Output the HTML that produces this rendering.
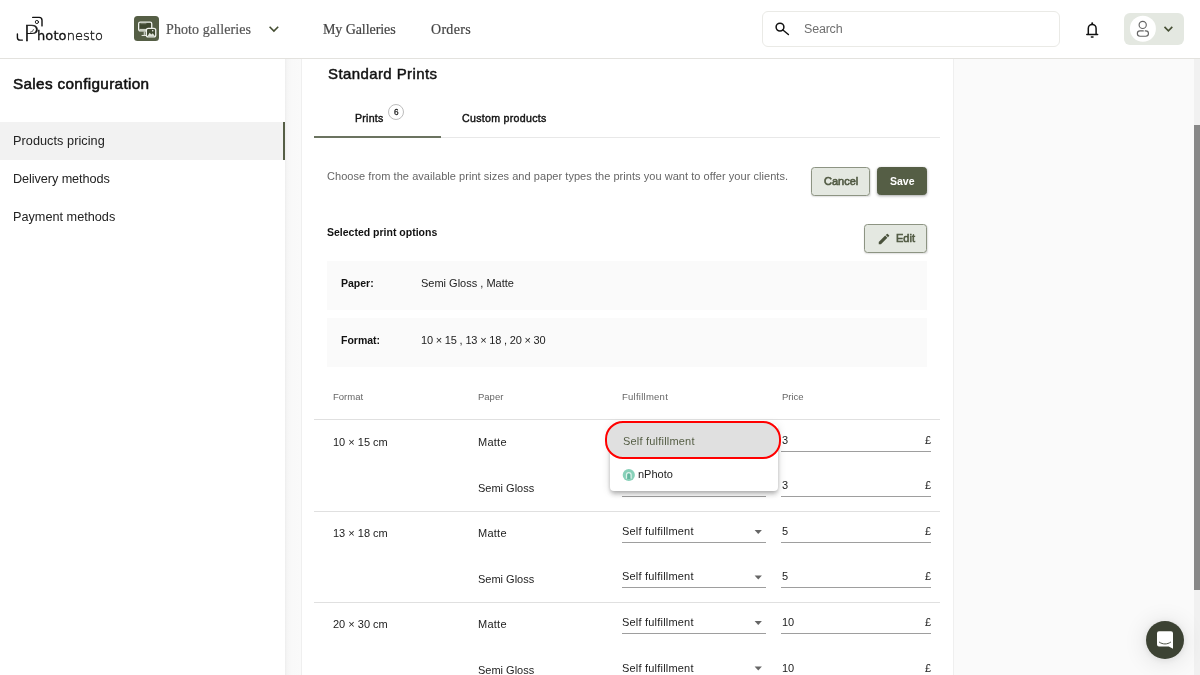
<!DOCTYPE html>
<html lang="en">
<head>
<meta charset="utf-8">
<title>Sales configuration</title>
<style>
*{box-sizing:border-box;margin:0;padding:0}
html,body{width:1200px;height:675px;overflow:hidden;background:#fafafa}
body{position:relative;font-family:"Liberation Sans",Arial,sans-serif;color:#212121;font-size:11px}
.a{position:absolute}
.t{will-change:transform;position:absolute;white-space:nowrap;line-height:1}
.serif{font-family:"Liberation Serif","DejaVu Serif",serif}
.b{font-weight:bold}
.dj{font-family:"DejaVu Sans","Liberation Sans",sans-serif}
#header{left:0;top:0;width:1200px;height:59px;background:#fff;border-bottom:1px solid #e3e2de}
#sidebar{left:0;top:59px;width:285px;height:617px;background:#fff}
#sideshadow{left:285px;top:59px;width:16px;height:617px;background:linear-gradient(90deg,#ededed,#f5f5f5 12%,#f9f9f9 40%,#fafafa)}
#card{left:301px;top:50px;width:653px;height:640px;background:#fff;border:1px solid #efefef}
.hl{position:absolute;height:1px;background:#e0e0e0}
.ul{position:absolute;height:1px;background:#9e9e9e}
.box{position:absolute;left:327px;width:600px;background:#fafafa}
.btn{position:absolute;border-radius:3.500px;border:1px solid #8d9483;background:#e4e8e1;box-shadow:0.500px 1px 1.500px rgba(0,0,0,.12)}
.r{font-size:11px;color:#222}
.arr{position:absolute;width:0;height:0;border-left:3.550px solid transparent;border-right:3.550px solid transparent;border-top:3.900px solid #606060}
.muted{color:#666}
.olive{color:#555e45}
</style>
</head>
<body>
<!-- page background pieces -->
<div class="a" id="sidebar"></div>
<div class="a" id="sideshadow"></div>
<div class="a" id="card"></div>

<!-- header -->
<div class="a" id="header"></div>
<svg class="a" id="logo" style="left:14px;top:12px" width="96" height="34" viewBox="14 12 96 34" fill="none" stroke="#111" stroke-width="1.4" stroke-linecap="round">
  <path d="M17.400 34v3.400a2.700 2.700 0 0 0 2.700 2.700h2.300"/>
  <path d="M30.400 32.300a3.300 3.300 0 0 0 3.100-2.700" stroke-width="0.700"/>
  <path d="M32.700 17.400h6.500a2.800 2.800 0 0 1 2.800 2.800v5.700"/>
  <circle cx="36.900" cy="22" r="1.600" stroke-width="0.900"/>
</svg>
<div class="t dj" id="logoP" style="left:23.300px;top:22.600px;font-size:22px;font-weight:200;color:#111;-webkit-text-stroke:0.400px #111;transform:scaleX(1.22);transform-origin:0 0">P</div>
<div class="t dj" id="logo1" style="left:37.300px;top:29.300px;font-size:13px;color:#111;letter-spacing:0.100px"><span style="-webkit-text-stroke:0.300px #111">hoto</span><span style="font-weight:200;-webkit-text-stroke:0.400px #222;color:#222;letter-spacing:0.050px">nesto</span></div>

<div class="a" id="galicon" style="left:134.300px;top:16.300px;width:25.200px;height:25.200px;border-radius:3.500px;background:#555e45"></div>
<svg class="a" style="left:134.300px;top:16.300px" width="25.200" height="25.200" viewBox="0 0 25.200 25.200" fill="none" stroke="#f1f3ee" stroke-width="1.300">
  <rect x="4.650" y="6.150" width="13.100" height="8.800" rx="1.600" fill="#3e472f"/>
  <rect x="5.300" y="12.900" width="7" height="1.700" fill="#c9cec1" stroke="none"/>
  <path d="M6.400 7.700h6" stroke="#aab09f" stroke-width="0.600"/>
  <path d="M10.300 15.400v3.600" stroke-width="1.100" stroke="#d5d9cf"/>
  <path d="M7.600 19.500h4.600" stroke-width="1" stroke="#e3e6de"/>
  <rect x="12.350" y="12.350" width="9.400" height="8.600" rx="1.900" fill="#414a32"/>
  <path d="M13.400 20.200l2.300-3.500 1.600 1.900 1.500-1.300 2.200 2.900z" fill="#dfe3d9" stroke="none"/>
  <circle cx="18.700" cy="14.700" r="0.800" fill="#f1f3ee" stroke="none"/>
</svg>
<div class="t serif" id="pg" style="left:166px;top:22.600px;font-size:14px;color:#555;letter-spacing:0.1px;-webkit-text-stroke:0.2px #555">Photo galleries</div>
<svg class="a" style="left:267px;top:24px" width="14" height="10" viewBox="0 0 14 10" fill="none" stroke="#454e33" stroke-width="1.6"><path d="M2.6 2.7L6.9 7l4.3-4.3"/></svg>
<div class="t serif" id="mg" style="left:323px;top:22.600px;font-size:14px;color:#444;letter-spacing:-0.08px;-webkit-text-stroke:0.2px #444">My Galleries</div>
<div class="t serif" id="ord" style="left:430.5px;top:22.600px;font-size:14px;color:#444;letter-spacing:0.3px;-webkit-text-stroke:0.2px #444">Orders</div>

<div class="a" id="search" style="left:762px;top:11px;width:298px;height:36px;border:1px solid #eaeae6;border-radius:6px;background:#fff"></div>
<svg class="a" style="left:770px;top:17px" width="24" height="24" viewBox="770 17 24 24" fill="none" stroke="#111" stroke-width="1.5"><circle cx="780" cy="27.100" r="3.900"/><path d="M782.900 30l5.500 4.500" stroke-linecap="round"/></svg>
<div class="t" id="searcht" style="left:803.700px;top:23.300px;font-size:12.500px;letter-spacing:-0.200px;color:#707070">Search</div>

<svg class="a" id="bell" style="left:1082px;top:19px" width="20" height="20" viewBox="0 0 20 20" fill="none" stroke="#111" stroke-width="1.5"><path d="M6.300 15.200V9.400a3.900 3.900 0 0 1 7.800 0v5.800"/><path d="M4.800 15.400h10.800" stroke-linecap="round"/><circle cx="10.200" cy="4.300" r="1" fill="#111" stroke="none"/><path d="M9.400 18.100h1.600" stroke-linecap="round"/></svg>

<div class="a" id="avatar" style="left:1124px;top:13px;width:60px;height:32px;border-radius:6px;background:#e4e8e1"></div>
<svg class="a" style="left:1124px;top:13px" width="60" height="32" viewBox="1124 13 60 32" fill="none">
  <circle cx="1142.900" cy="28.800" r="13" fill="#fff"/>
  <circle cx="1142.700" cy="24.900" r="3.600" stroke="#666" stroke-width="1.150"/>
  <path d="M1143.300 30.900h-3.300a2.650 2.650 0 0 0 0 5.300h5.800a2.650 2.650 0 0 0 0-5.300h-0.600" stroke="#666" stroke-width="1.150" stroke-linecap="round"/>
  <path d="M1164.500 26.900l3.900 4 3.900-4" stroke="#454e33" stroke-width="1.600"/>
</svg>

<!-- sidebar -->
<div class="t" id="sc" style="left:13px;top:76.400px;font-size:15.300px;letter-spacing:0.330px;color:#111;-webkit-text-stroke:0.550px #111">Sales configuration</div>
<div class="a" style="left:0;top:122px;width:285px;height:38px;background:#f2f2f2"></div>
<div class="a" style="left:283px;top:122px;width:2px;height:38px;background:#555e45"></div>
<div class="t" id="s1" style="left:13px;top:134.9px;font-size:12.7px;color:#222;letter-spacing:0.05px">Products pricing</div>
<div class="t" id="s2" style="left:13px;top:172.9px;font-size:12.7px;color:#222;letter-spacing:-0.08px">Delivery methods</div>
<div class="t" id="s3" style="left:13px;top:211px;font-size:12.7px;color:#222">Payment methods</div>

<!-- main card -->
<div class="t" id="sp" style="left:328px;top:66px;font-size:15px;color:#111;-webkit-text-stroke:0.45px #111;letter-spacing:0.4px">Standard Prints</div>
<div class="t" id="tab1" style="left:355.300px;top:113.300px;font-size:10.600px;color:#111;-webkit-text-stroke:0.400px #111;letter-spacing:0.250px">Prints</div>
<div class="a" id="badge" style="left:387.6px;top:104px;width:16px;height:16px;border-radius:50%;border:1px solid #bdbdbd;background:#fff"></div>
<div class="t" id="badget" style="left:393.500px;top:108.700px;font-size:8.200px;color:#222;-webkit-text-stroke:0.300px #222">6</div>
<div class="t" id="tab2" style="left:462px;top:113.300px;font-size:10.600px;color:#111;-webkit-text-stroke:0.400px #111;letter-spacing:0.300px">Custom products</div>
<div class="hl" style="left:314px;top:137.400px;width:626px;background:#e8e8e8"></div>
<div class="a" style="left:314px;top:136px;width:127px;height:2px;background:#6b7360"></div>

<div class="t muted" id="choose" style="left:327px;top:171.2px;font-size:11px;letter-spacing:0.047px">Choose from the available print sizes and paper types the prints you want to offer your clients.</div>
<div class="btn" id="cancel" style="left:810.600px;top:167px;width:59.400px;height:29px"></div>
<div class="t olive" id="cancelt" style="left:823.500px;top:176px;font-size:11px;-webkit-text-stroke:0.6px #4f5841">Cancel</div>
<div class="btn" id="save" style="left:877px;top:167px;width:50px;height:28px;background:#555e45;border-color:#555e45;box-shadow:0 1px 3px rgba(0,0,0,.35)"></div>
<div class="t b" id="savet" style="left:890px;top:176.2px;font-size:10.5px;color:#fff">Save</div>

<div class="t b" id="spo" style="left:327px;top:226.9px;font-size:10.5px;color:#111">Selected print options</div>
<div class="btn" id="edit" style="left:864px;top:224px;width:63px;height:29px"></div>
<svg class="a" style="left:877px;top:232px" width="14" height="14" viewBox="0 0 24 24" fill="#4a523c"><path d="M3 17.250V21h3.750L17.810 9.940l-3.750-3.750L3 17.250zM20.710 7.040a1 1 0 0 0 0-1.410l-2.340-2.340a1 1 0 0 0-1.410 0l-1.830 1.830 3.750 3.750 1.830-1.830z"/></svg>
<div class="t olive" id="editt" style="left:895.500px;top:233px;font-size:11px;-webkit-text-stroke:0.6px #4f5841">Edit</div>

<div class="box" style="top:261px;height:49px"></div>
<div class="box" style="top:318px;height:49px"></div>
<div class="t b" id="paperl" style="left:341px;top:277.6px;font-size:10.5px;color:#111">Paper:</div>
<div class="t" id="paperv" style="left:420.500px;top:278px;font-size:11px;color:#222">Semi Gloss , Matte</div>
<div class="t b" id="formatl" style="left:341px;top:335.1px;font-size:10.5px;color:#111">Format:</div>
<div class="t" id="formatv" style="left:420.500px;top:334.7px;font-size:11px;color:#222;letter-spacing:-0.18px">10 × 15 , 13 × 18 , 20 × 30</div>

<!-- table -->
<div class="t muted" id="h1" style="left:333.400px;top:391.600px;font-size:9.500px">Format</div>
<div class="t muted" id="h2" style="left:478px;top:391.600px;font-size:9.500px">Paper</div>
<div class="t muted" id="h3" style="left:622px;top:391.600px;font-size:9.500px;letter-spacing:0.25px">Fulfillment</div>
<div class="t muted" id="h4" style="left:781.500px;top:391.600px;font-size:9.500px">Price</div>
<div class="hl" style="left:314px;top:419.200px;width:626px"></div>
<div class="hl" style="left:314px;top:510.700px;width:626px"></div>
<div class="hl" style="left:314px;top:601.600px;width:626px"></div>
<div id="rows">
<div class="t r" id="f1" style="left:333.4px;top:437px">10 × 15 cm</div>
<div class="t r" id="p1" style="left:478px;top:437px;letter-spacing:0.25px">Matte</div>
<div class="t r" id="pr1" style="left:781.6px;top:435px">3</div>
<div class="t r" id="gbp1" style="left:924.8px;top:435px">£</div>
<div class="ul" style="left:781px;top:450.7px;width:150px"></div>
<div class="t r" id="p2" style="left:478px;top:483px">Semi Gloss</div>
<div class="ul" style="left:622px;top:496.3px;width:143.500px"></div>
<div class="t r" id="pr2" style="left:781.6px;top:480px">3</div>
<div class="t r" id="gbp2" style="left:924.8px;top:480px">£</div>
<div class="ul" style="left:781px;top:496.3px;width:150px"></div>
<div class="t r" id="f3" style="left:333.4px;top:528px">13 × 18 cm</div>
<div class="t r" id="p3" style="left:478px;top:528px;letter-spacing:0.25px">Matte</div>
<div class="t r" id="s3t" style="left:622.4px;top:526px;letter-spacing:0.2px">Self fulfillment</div>
<svg class="a" style="left:754px;top:529px" width="9" height="7" viewBox="0 0 9 7"><path d="M0.600 0.89h7.300l-3.650 4z" fill="#666"/></svg>
<div class="ul" style="left:622px;top:541.8px;width:143.500px"></div>
<div class="t r" id="pr3" style="left:781.6px;top:526px">5</div>
<div class="t r" id="gbp3" style="left:924.8px;top:526px">£</div>
<div class="ul" style="left:781px;top:541.8px;width:150px"></div>
<div class="t r" id="p4" style="left:478px;top:574px">Semi Gloss</div>
<div class="t r" id="s4t" style="left:622.4px;top:571px;letter-spacing:0.2px">Self fulfillment</div>
<svg class="a" style="left:754px;top:575px" width="9" height="7" viewBox="0 0 9 7"><path d="M0.600 0.46h7.300l-3.650 4z" fill="#666"/></svg>
<div class="ul" style="left:622px;top:587.4px;width:143.500px"></div>
<div class="t r" id="pr4" style="left:781.6px;top:571px">5</div>
<div class="t r" id="gbp4" style="left:924.8px;top:571px">£</div>
<div class="ul" style="left:781px;top:587.4px;width:150px"></div>
<div class="t r" id="f5" style="left:333.4px;top:619px">20 × 30 cm</div>
<div class="t r" id="p5" style="left:478px;top:619px;letter-spacing:0.25px">Matte</div>
<div class="t r" id="s5t" style="left:622.4px;top:617px;letter-spacing:0.2px">Self fulfillment</div>
<svg class="a" style="left:754px;top:620px" width="9" height="7" viewBox="0 0 9 7"><path d="M0.600 1.03h7.300l-3.650 4z" fill="#666"/></svg>
<div class="ul" style="left:622px;top:633.0px;width:143.500px"></div>
<div class="t r" id="pr5" style="left:781.6px;top:617px">10</div>
<div class="t r" id="gbp5" style="left:924.8px;top:617px">£</div>
<div class="ul" style="left:781px;top:633.0px;width:150px"></div>
<div class="t r" id="p6" style="left:478px;top:665px">Semi Gloss</div>
<div class="t r" id="s6t" style="left:622.4px;top:663px;letter-spacing:0.2px">Self fulfillment</div>
<svg class="a" style="left:754px;top:666px" width="9" height="7" viewBox="0 0 9 7"><path d="M0.600 0.60h7.300l-3.650 4z" fill="#666"/></svg>
<div class="ul" style="left:622px;top:678.6px;width:143.500px"></div>
<div class="t r" id="pr6" style="left:781.6px;top:663px">10</div>
<div class="t r" id="gbp6" style="left:924.8px;top:663px">£</div>
<div class="ul" style="left:781px;top:678.6px;width:150px"></div>
</div><!--endrows-->

<!-- dropdown popup -->
<div class="a" id="menu" style="left:610px;top:424px;width:168px;height:67px;background:#fff;border-radius:4px;box-shadow:0 2px 4px -1px rgba(0,0,0,.2),0 4px 5px 0 rgba(0,0,0,.14),0 1px 10px 0 rgba(0,0,0,.12)"></div>
<div class="a" id="hi" style="left:605px;top:421px;width:176px;height:38px;border:2.500px solid #f00;border-radius:18px;background:#e0e0e0"></div>
<div class="t olive" id="hit" style="left:622.500px;top:435.700px;font-size:11px;letter-spacing:0.2px">Self fulfillment</div>
<svg class="a" id="nicon" style="left:622px;top:468px" width="14" height="14" viewBox="622 468 14 14">
  <circle cx="628.800" cy="475" r="6.100" fill="#88d1b9"/>
  <path d="M626.600 479v-4.200a2.250 2.250 0 0 1 4.500 0v4.200z" fill="#63b89f"/>
  <path d="M626.500 478.800v-4a2.300 2.300 0 0 1 4.600 0v4" fill="none" stroke="#dff3ec" stroke-width="1.250"/>
</svg>
<div class="t" id="nphoto" style="left:638px;top:468.700px;font-size:11px;color:#222">nPhoto</div>

<!-- scrollbar -->
<div class="a" style="left:1194px;top:59px;width:6px;height:616px;background:#f1f1f1"></div>
<div class="a" style="left:1194px;top:125px;width:6px;height:465px;background:#888"></div>

<!-- chat bubble -->
<div class="a" id="chat" style="left:1146px;top:621px;width:38px;height:38px;border-radius:50%;background:#3c4233;box-shadow:0 1px 6px rgba(0,0,0,.08),0 2px 24px rgba(0,0,0,.12)"></div>
<svg class="a" style="left:1146px;top:621px" width="38" height="38" viewBox="0 0 38 38"><path d="M13 10.200h12a2 2 0 0 1 2 2v15.600l-4.200-2.200H13a2 2 0 0 1-2-2V12.200a2 2 0 0 1 2-2z" fill="#fff"/><path d="M13.400 21.200c3.400 2.400 7.800 2.400 11.200 0" fill="none" stroke="#3c4233" stroke-width="0.900" stroke-linecap="round"/></svg>
</body>
</html>
